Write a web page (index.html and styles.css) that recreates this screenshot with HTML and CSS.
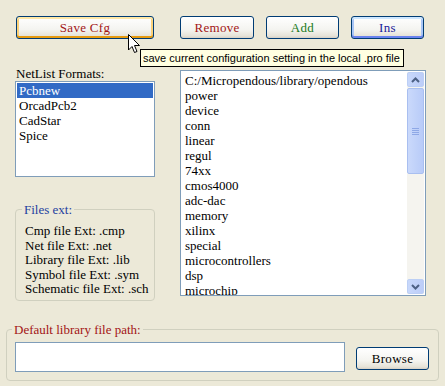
FILE: index.html
```html
<!DOCTYPE html>
<html lang="en">
<head>
    <meta charset="UTF-8">
    <title>Library Files</title>
    <link rel="stylesheet" href="styles.css">
</head>
<body>
    <div class="dialog">
        <div class="toolbar">
            <button class="btn btn-save hover">Save Cfg</button>
            <button class="btn btn-remove">Remove</button>
            <button class="btn btn-add">Add</button>
            <button class="btn btn-ins focus">Ins</button>
        </div>

        <div class="middle">
            <div class="left-col">
                <div class="caption">NetList Formats:</div>
                <ul class="listbox formats">
                    <li class="selected">Pcbnew</li>
                    <li>OrcadPcb2</li>
                    <li>CadStar</li>
                    <li>Spice</li>
                </ul>
                <fieldset class="group files-ext">
                    <legend>Files ext:</legend>
                    <div>Cmp file Ext: .cmp</div>
                    <div>Net file Ext: .net</div>
                    <div>Library file Ext: .lib</div>
                    <div>Symbol file Ext: .sym</div>
                    <div>Schematic file Ext: .sch</div>
                </fieldset>
            </div>

            <div class="libs">
                <ul class="lib-items">
                    <li>C:/Micropendous/library/opendous</li>
                    <li>power</li>
                    <li>device</li>
                    <li>conn</li>
                    <li>linear</li>
                    <li>regul</li>
                    <li>74xx</li>
                    <li>cmos4000</li>
                    <li>adc-dac</li>
                    <li>memory</li>
                    <li>xilinx</li>
                    <li>special</li>
                    <li>microcontrollers</li>
                    <li>dsp</li>
                    <li>microchip</li>
                </ul>
                <div class="scrollbar">
                    <div class="sb-btn">
                        <svg width="9" height="6" viewBox="0 0 9 6"><path d="M1 5 L4.5 1.5 L8 5" fill="none" stroke="#4d6185" stroke-width="2"/></svg>
                    </div>
                    <div class="sb-thumb">
                        <span></span><span></span><span></span><span></span>
                    </div>
                    <div class="sb-track"></div>
                    <div class="sb-btn">
                        <svg width="9" height="6" viewBox="0 0 9 6"><path d="M1 1 L4.5 4.5 L8 1" fill="none" stroke="#4d6185" stroke-width="2"/></svg>
                    </div>
                </div>
            </div>
        </div>

        <fieldset class="group path-group">
            <legend>Default library file path:</legend>
            <input type="text" class="path-input">
            <button class="btn btn-browse">Browse</button>
        </fieldset>

        <!-- hover tooltip over the Save Cfg button -->
        <div class="tooltip">save current configuration setting in the local .pro file</div>
        <svg class="cursor" width="13" height="20" viewBox="0 0 13 20">
            <path d="M0.5 0.5 L0.5 16 L4 12.5 L6.5 18.5 L9 17.5 L6.5 11.5 L11.5 11.5 Z" fill="#fff" stroke="#000" stroke-width="1"/>
        </svg>
    </div>
</body>
</html>
```

FILE: styles.css
```css
* {
    box-sizing: border-box;
    margin: 0;
    padding: 0;
}

body {
    background-color: #ece9d8;
    font-family: 'Liberation Serif', 'Times New Roman', serif;
    font-size: 13px;
    color: #000;
}

.dialog {
    position: relative;
    width: 445px;
    height: 386px;
    padding-top: 16px;
}

.toolbar {
    display: flex;
    padding-left: 16px;
    height: 23px;
}

.btn {
    height: 23px;
    border: 1px solid #003c74;
    border-radius: 3px;
    background: linear-gradient(#ffffff, #f4f4f0 60%, #e6e3d8 90%, #d6d0c5);
    font-family: 'Liberation Serif', 'Times New Roman', serif;
    font-size: 13px;
    letter-spacing: 0.3px;
}

.btn-save {
    width: 138px;
    color: #a31515;
}

.btn-remove {
    width: 74px;
    margin-left: 26px;
    color: #a31515;
}

.btn-add {
    width: 73px;
    margin-left: 12px;
    color: #1a7a1a;
}

.btn-ins {
    width: 73px;
    margin-left: 12px;
    color: #1a1a9a;
}

.hover {
    box-shadow: inset 0 2px 0 #ffe8a6, inset 0 -2px 0 #e59a10, inset 2px 0 0 #fbd27a, inset -2px 0 0 #fbd27a;
}

.focus {
    box-shadow: inset 0 2px 0 #cee7ff, inset 0 -2px 0 #6982ee, inset 2px 0 0 #a9c6f6, inset -2px 0 0 #a9c6f6;
}

.middle {
    display: flex;
    margin-top: 27px;
}

.left-col {
    width: 140px;
    margin-left: 15px;
}

.caption {
    height: 15px;
    line-height: 15px;
    padding-left: 1px;
}

.listbox {
    list-style: none;
    background: #fff;
    border: 1px solid #7f9db9;
}

.formats {
    height: 96px;
    padding: 1px;
}

.formats li {
    height: 15px;
    line-height: 15px;
    padding-left: 2px;
}

.formats .selected {
    background: #316ac5;
    color: #fff;
}

.group {
    border: 1px solid #d0d0bf;
    border-radius: 4px;
}

.group legend {
    line-height: 15px;
}

.files-ext {
    margin-top: 25px;
    height: 99px;
    padding: 7px 0 0 9px;
}

.files-ext legend {
    margin-left: -3px;
    padding: 0 2px;
    color: #1f3fa0;
}

.files-ext div {
    height: 14.5px;
    line-height: 14.5px;
}

.libs {
    display: flex;
    width: 246px;
    height: 226px;
    margin-left: 25px;
    margin-top: 4px;
    background: #fff;
    border: 1px solid #7f9db9;
    overflow: hidden;
}

.lib-items {
    list-style: none;
    flex: 1;
    padding: 2px 0 0 4px;
    overflow: hidden;
}

.lib-items li {
    height: 15px;
    line-height: 15px;
    white-space: nowrap;
}

.scrollbar {
    display: flex;
    flex-direction: column;
    width: 17px;
    margin: 1px 1px 1px 0;
    background: #f5f4ef;
}

.sb-btn {
    height: 15px;
    display: flex;
    align-items: center;
    justify-content: center;
    border: 1px solid #bccff5;
    border-radius: 2px;
    background: linear-gradient(90deg, #c8d8fb, #bccdf8);
}

.sb-thumb {
    height: 86px;
    margin-top: 1px;
    border: 1px solid #a9bff0;
    border-radius: 2px;
    background: linear-gradient(90deg, #cad9fb, #b8cbf8);
    display: flex;
    flex-direction: column;
    align-items: center;
    justify-content: center;
    gap: 1px;
}

.sb-thumb span {
    display: block;
    width: 7px;
    height: 1px;
    background: #8ea8e6;
}

.sb-track {
    flex: 1;
}

.path-group {
    display: flex;
    align-items: flex-start;
    width: 433px;
    height: 59px;
    margin: 21px 0 0 6px;
    padding: 5px 0 0 8px;
}

.path-group legend {
    margin-left: -3px;
    padding: 0 2px;
    color: #a31515;
}

.path-input {
    width: 330px;
    height: 30px;
    border: 1px solid #7f9db9;
    background: #fff;
}

.btn-browse {
    width: 73px;
    margin: 5px 0 0 11px;
    color: #000;
}

.tooltip {
    position: absolute;
    left: 140px;
    top: 49px;
    width: 264px;
    height: 18px;
    padding-left: 2px;
    border: 1px solid #000;
    background: #ffffe1;
    font-family: 'Liberation Sans', Arial, sans-serif;
    font-size: 11px;
    line-height: 16px;
    white-space: nowrap;
    overflow: hidden;
}

.cursor {
    position: absolute;
    left: 128px;
    top: 34px;
}
```
